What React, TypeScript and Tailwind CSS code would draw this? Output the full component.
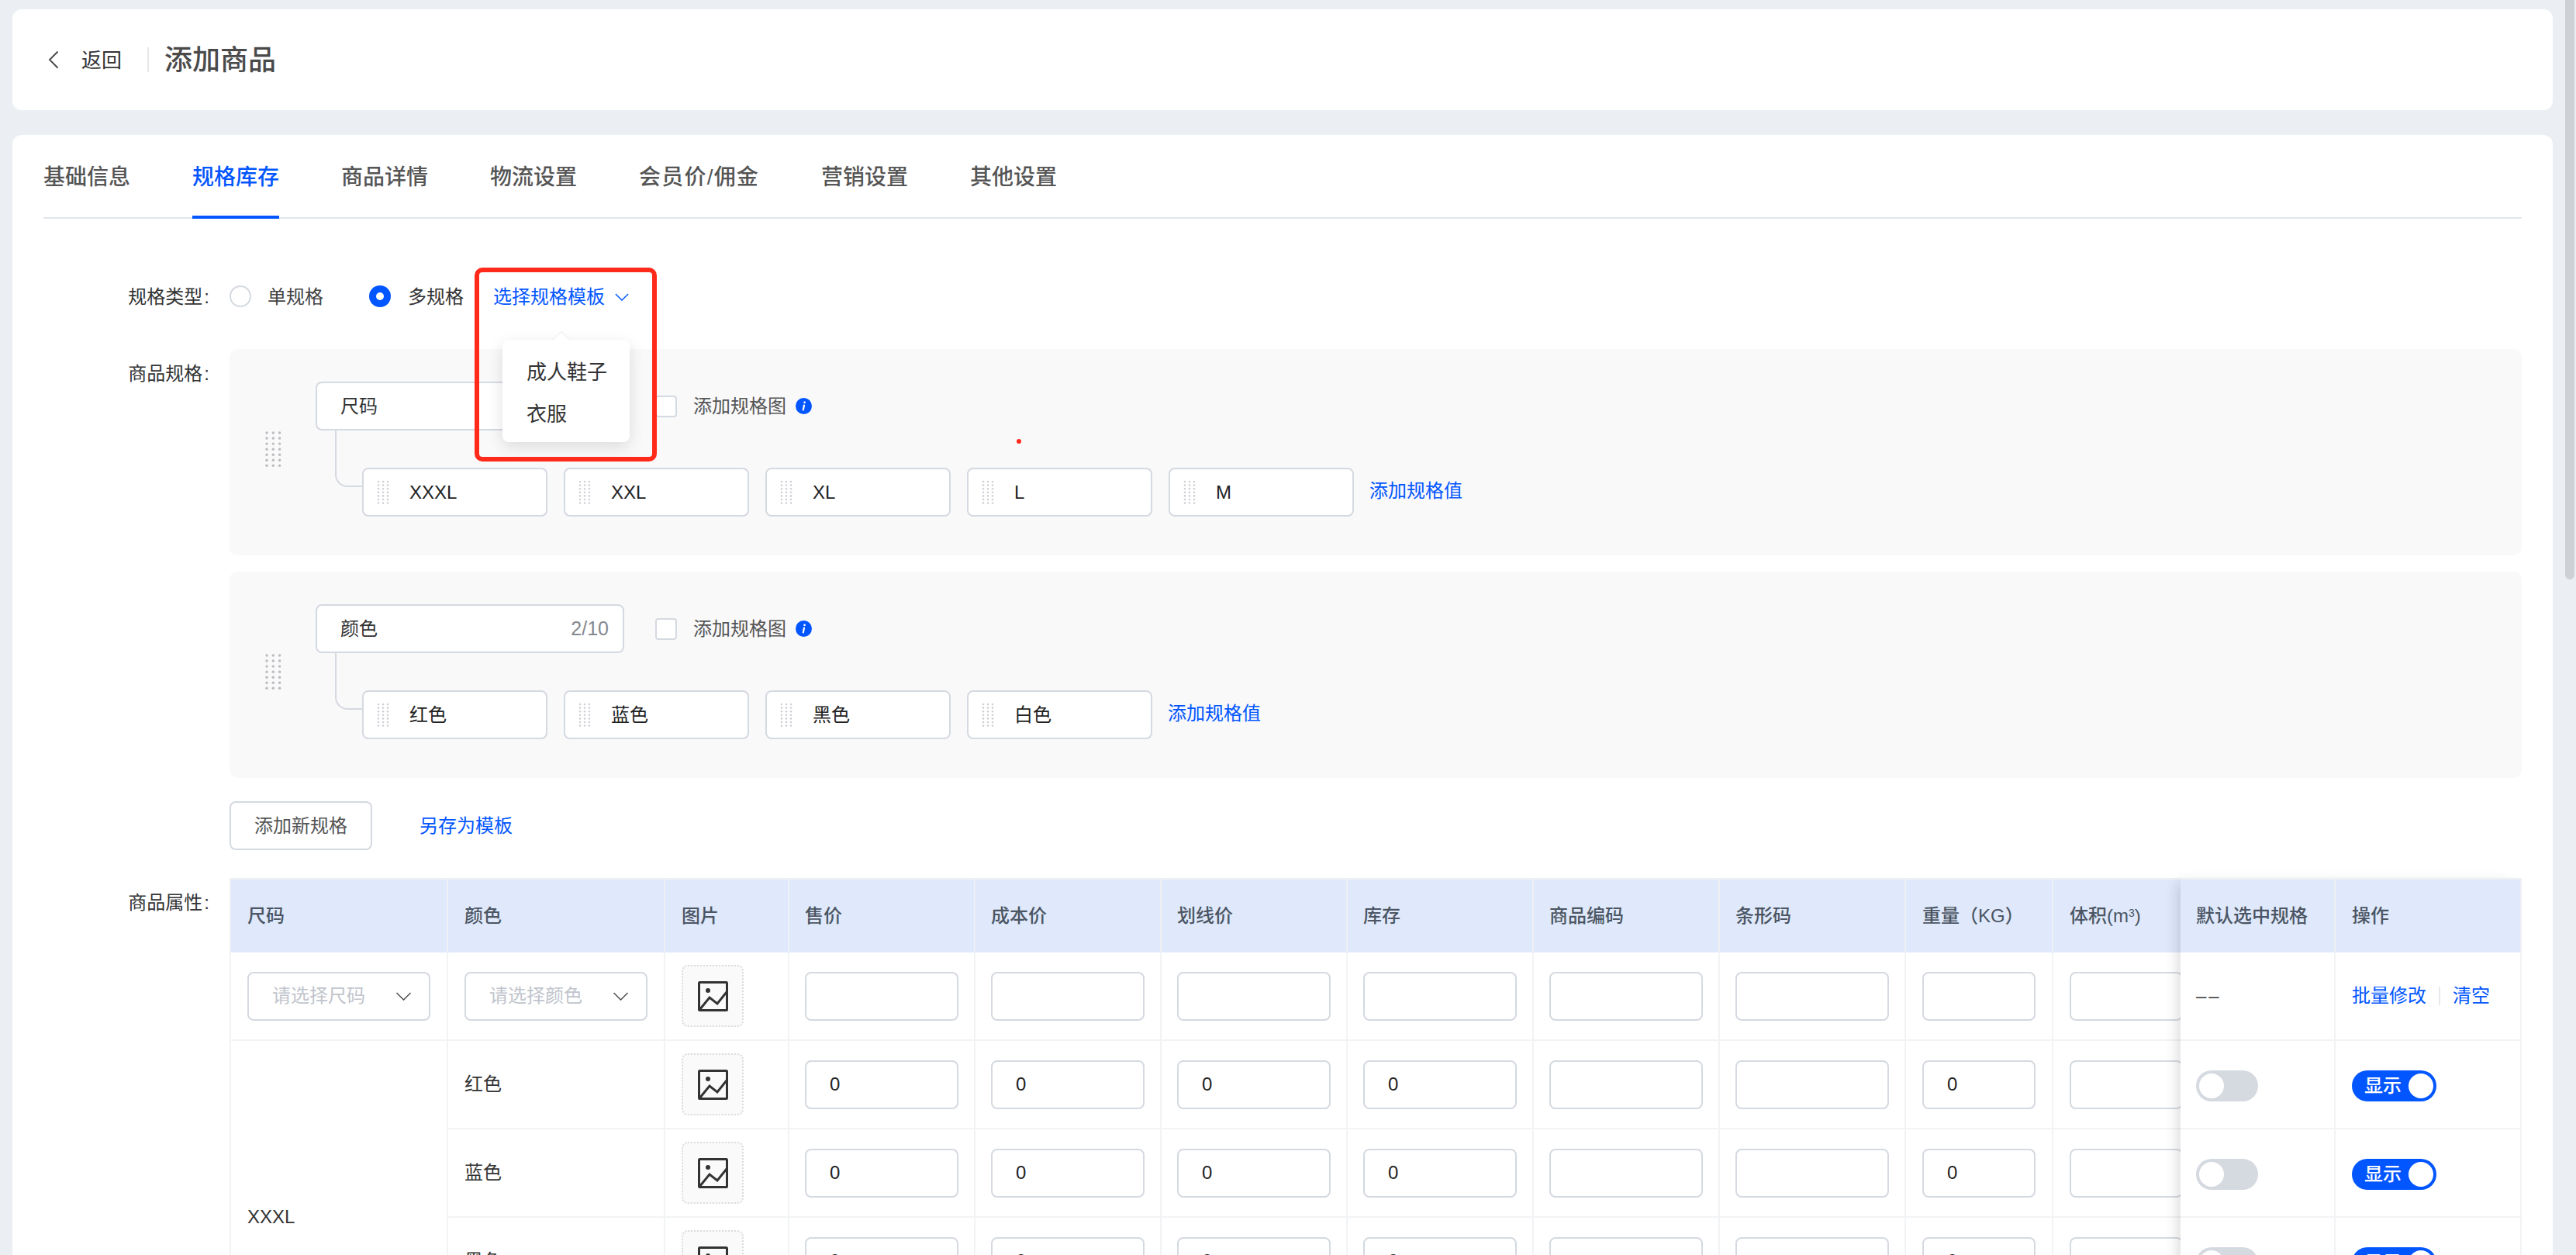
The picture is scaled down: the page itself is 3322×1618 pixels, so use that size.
import React from "react";

const blue = "text-[#0256ff]";
const tabs = ["基础信息", "规格库存", "商品详情", "物流设置", "会员价/佣金", "营销设置", "其他设置"];
const specs = [
  { name: "尺码", count: "5/10", values: ["XXXL", "XXL", "XL", "L", "M"] },
  { name: "颜色", count: "2/10", values: ["红色", "蓝色", "黑色", "白色"] },
];
const priceCols = ["售价", "成本价", "划线价", "库存", "商品编码", "条形码"];
const colors = ["红色", "蓝色", "黑色"];

function Chevron({ className, stroke = "#555" }: { className: string; stroke?: string }) {
  return (
    <svg className={className} viewBox="0 0 20 11" fill="none">
      <path d="M1 1l9 9 9-9" stroke={stroke} strokeWidth="1.6" />
    </svg>
  );
}

function Dots({ big }: { big?: boolean }) {
  const dots = [];
  const dx = big ? 8.3 : 6;
  const dy = big ? 7.05 : 4.6;
  for (let c = 0; c < 3; c++) {
    for (let r = 0; r < 7; r++) {
      dots.push(
        <circle key={`${c}-${r}`} cx={2 + c * dx} cy={2 + r * dy} r={big ? 1.7 : 1.3} fill={big ? "#b9bbbf" : "#cfd1d6"} />
      );
    }
  }
  return (
    <svg className={big ? "w-[21px] h-[46px] shrink-0" : "w-[16px] h-[32px] shrink-0"} viewBox={big ? "0 0 21 46" : "0 0 16 32"}>
      {dots}
    </svg>
  );
}

function InfoIcon() {
  return (
    <svg className="w-[21px] h-[21px]" viewBox="0 0 21 21">
      <circle cx="10.5" cy="10.5" r="10.5" fill="#0256ff" />
      <path d="M11 9.5l-1.2 6" stroke="#fff" strokeWidth="2.2" strokeLinecap="round" />
      <circle cx="11.6" cy="5.8" r="1.4" fill="#fff" />
    </svg>
  );
}

function ImageIcon() {
  return (
    <div className="w-[80px] h-[80px] rounded-lg border-2 border-dotted border-[#dcdcdc] bg-[#fafafa] flex items-center justify-center">
      <svg className="w-[39px] h-[39px]" viewBox="0 0 39 39" fill="none">
        <rect x="1.5" y="1.5" width="36" height="36" rx="1" stroke="#333" strokeWidth="3" />
        <circle cx="13" cy="12" r="3" fill="#333" />
        <path d="M2 37l13-16 10 8 12-15" stroke="#333" strokeWidth="3" />
      </svg>
    </div>
  );
}

function Toggle({ on }: { on?: boolean }) {
  if (on) {
    return (
      <div className="mt-1 w-[109px] h-[40px] rounded-full bg-[#0256ff] flex items-center justify-between pl-4 pr-1 text-white text-[24px] font-medium">
        <span>显示</span>
        <span className="w-[32px] h-[32px] rounded-full bg-white" />
      </div>
    );
  }
  return (
    <div className="mt-1 w-[80px] h-[40px] rounded-full bg-[#d5d9e0] flex items-center pl-1">
      <span className="w-[32px] h-[32px] rounded-full bg-white" />
    </div>
  );
}

function Field({ value }: { value?: string }) {
  return (
    <div className="w-full h-[63px] rounded-lg border-2 border-[#d5d9e0] bg-white pl-[30px] flex items-center text-[24px] text-[#222]">
      {value}
    </div>
  );
}

function Select({ placeholder }: { placeholder: string }) {
  return (
    <div className="w-[236px] h-[63px] rounded-lg border-2 border-[#d5d9e0] bg-white pl-[30px] pr-[22px] flex items-center justify-between text-[24px] text-[#c0c4cc]">
      <span>{placeholder}</span>
      <Chevron className="w-[21px] h-[11px]" />
    </div>
  );
}

const headCell = "h-[96px] border-t-2 border-r-2 border-[#eef0f3] bg-[#dfe9fb] text-left align-middle text-[24px] font-medium text-[#4b5563] whitespace-nowrap";
const bodyCell = "h-[114px] border-r-2 border-b-2 border-[#f2f3f5] align-middle text-[24px] text-[#333]";

function SpecPanel({ spec }: { spec: (typeof specs)[number] }) {
  return (
    <div className="h-[266px] rounded-[10px] bg-[#f9f9fa] pl-[46px] flex items-center">
      <div className="-mt-2">
        <Dots big />
      </div>
      <div className="ml-[44px] self-start pt-[42px]">
        <div className="flex items-center">
          <div className="w-[398px] h-[63px] rounded-lg border-2 border-[#d5d9e0] bg-white pl-[30px] pr-[18px] flex items-center justify-between text-[24px] text-[#333]">
            <span>{spec.name}</span>
            <span className="text-[25px] text-[#86888e]">{spec.count}</span>
          </div>
          <div className="ml-[40px] w-[28px] h-[28px] rounded border-2 border-[#d5d9e0] bg-white" />
          <span className="ml-[21px] text-[24px] text-[#555]">添加规格图</span>
          <span className="ml-3 flex">
            <InfoIcon />
          </span>
        </div>
        <div className="mt-[48px] flex items-center">
          <div className="ml-[25px] w-[35px] h-[74px] -mt-[49px] self-start border-l-2 border-b-2 border-[#d5d9e0] rounded-bl-[16px]" />
          <div className="flex gap-[21px]">
            {spec.values.map((v) => (
              <div key={v} className="w-[239px] h-[63px] rounded-lg border-2 border-[#d5d9e0] bg-white pl-[17px] flex items-center text-[24px] text-[#222]">
                <Dots />
                <span className="ml-[26px]">{v}</span>
              </div>
            ))}
          </div>
          <span className={`ml-5 mb-1 text-[24px] ${blue}`}>添加规格值</span>
        </div>
      </div>
    </div>
  );
}

export default function App() {
  return (
    <div className="relative h-[1618px] w-[3322px] overflow-hidden bg-[#ebeff3] flex [font-family:'Liberation_Sans','Noto_Sans_CJK_SC',sans-serif]">
      <main className="w-[3308px] shrink-0 px-4 pt-3">
        <div className="h-[130px] rounded-xl bg-white pl-[46px] flex items-center">
          <svg className="w-[14px] h-[24px]" viewBox="0 0 14 24" fill="none">
            <path d="M12.5 1.5L2 12l10.5 10.5" stroke="#444" strokeWidth="1.8" />
          </svg>
          <span className="ml-[29px] pt-[2px] text-[26px] text-[#333]">返回</span>
          <span className="ml-[33px] w-[2px] h-[32px] bg-[#e6e8ec]" />
          <h1 className="ml-5 pt-[2px] text-[36px] font-medium text-[#4a4a4a]">添加商品</h1>
        </div>

        <div className="mt-8 h-[1500px] rounded-xl bg-white px-10">
          <div className="h-[108px] flex items-start gap-[80px] border-b-2 border-[#e1e5ea]">
            {tabs.map((t, i) => (
              <div
                key={t}
                className={`h-[108px] flex items-center border-b-4 pt-[6px] text-[28px] font-medium ${
                  i === 1 ? "border-[#0256ff] text-[#0256ff]" : "border-transparent text-[#555]"
                } ${i === 4 ? "tracking-[1.2px]" : ""}`}
              >
                {t}
              </div>
            ))}
          </div>

          <div className="mt-[72px] flex h-[56px] items-center text-[24px]">
            <div className="w-[214px] pt-[2px] text-right text-[#333]">
              规格类型<span className="ml-[2px]">:</span>
            </div>
            <div className="ml-[26px] w-[28px] h-[28px] rounded-full border-2 border-[#d5d9e0] bg-white" />
            <span className="ml-[21px] pt-[2px] text-[#444]">单规格</span>
            <div className="ml-[59px] w-[28px] h-[28px] rounded-full bg-[#0256ff] flex items-center justify-center">
              <span className="w-[10px] h-[10px] rounded-full bg-white" />
            </div>
            <span className="ml-[22px] pt-[2px] text-[#333]">多规格</span>
            <div className={`relative ml-[38px] flex items-center pt-[2px] ${blue}`}>
              <span>选择规格模板</span>
              <Chevron className="ml-[13px] w-[18px] h-[10px]" stroke="#0256ff" />
              <div className="absolute left-[12px] top-[75px] z-20 w-[164px] rounded-lg bg-white pt-[15px] pb-[9px] pl-[31px] text-[26px] leading-[54px] text-[#333] shadow-[0_6px_20px_rgba(0,0,0,0.12)]">
                <span className="absolute -top-[8px] left-[68px] w-[16px] h-[16px] rotate-45 bg-white border-l border-t border-[#eceef1]" />
                <div>成人鞋子</div>
                <div>衣服</div>
              </div>
            </div>
          </div>

          <div className="mt-10 flex">
            <div className="w-[214px] pt-[14px] text-right text-[24px] leading-[36px] text-[#333]">
              商品规格<span className="ml-[2px]">:</span>
            </div>
            <div className="ml-[26px] flex-1">
              <div className="flex flex-col gap-[21px]">
                {specs.map((s) => (
                  <SpecPanel key={s.name} spec={s} />
                ))}
              </div>
              <div className="mt-[30px] flex items-center text-[24px]">
                <div className="w-[184px] h-[63px] rounded-lg border-2 border-[#d5d9e0] flex items-center justify-center text-[#555]">添加新规格</div>
                <span className={`ml-[61px] ${blue}`}>另存为模板</span>
              </div>
            </div>
          </div>

          <div className="mt-[36px] flex">
            <div className="w-[214px] pt-[14px] text-right text-[24px] leading-[36px] text-[#333]">
              商品属性<span className="ml-[2px]">:</span>
            </div>
            <div className="ml-[26px] flex flex-1">
              <div className="w-[2516px] shrink-0 overflow-hidden">
                <table className="w-[2542px] table-fixed border-separate border-spacing-0">
                  <colgroup>
                    <col className="w-[282px]" />
                    <col className="w-[280px]" />
                    <col className="w-[160px]" />
                    {priceCols.map((c) => (
                      <col key={c} className="w-[240px]" />
                    ))}
                    <col className="w-[190px]" />
                    <col className="w-[190px]" />
                  </colgroup>
                  <thead>
                    <tr>
                      <th className={`${headCell} border-l-2 px-[21px]`}>尺码</th>
                      <th className={`${headCell} px-[21px]`}>颜色</th>
                      <th className={`${headCell} px-[21px]`}>图片</th>
                      {priceCols.map((c) => (
                        <th key={c} className={`${headCell} px-5`}>{c}</th>
                      ))}
                      <th className={`${headCell} px-[21px]`}>重量（KG）</th>
                      <th className={`${headCell} px-[21px]`}>
                        体积(m<sup className="text-[14px]">3</sup>)
                      </th>
                    </tr>
                  </thead>
                  <tbody>
                    <tr>
                      <td className={`${bodyCell} border-l-2 px-[21px]`}>
                        <Select placeholder="请选择尺码" />
                      </td>
                      <td className={`${bodyCell} px-[21px]`}>
                        <Select placeholder="请选择颜色" />
                      </td>
                      <td className={`${bodyCell} px-[21px]`}>
                        <ImageIcon />
                      </td>
                      {priceCols.map((c) => (
                        <td key={c} className={`${bodyCell} px-5`}>
                          <Field />
                        </td>
                      ))}
                      <td className={`${bodyCell} px-[21px]`}>
                        <Field />
                      </td>
                      <td className={`${bodyCell} px-[21px]`}>
                        <Field />
                      </td>
                    </tr>
                    {colors.map((color, i) => (
                      <tr key={color}>
                        {i === 0 && (
                          <td rowSpan={4} className={`${bodyCell} border-l-2 px-[21px]`}>XXXL</td>
                        )}
                        <td className={`${bodyCell} px-[21px]`}>{color}</td>
                        <td className={`${bodyCell} px-[21px]`}>
                          <ImageIcon />
                        </td>
                        {priceCols.map((c, j) => (
                          <td key={c} className={`${bodyCell} px-5`}>
                            <Field value={j < 4 ? "0" : undefined} />
                          </td>
                        ))}
                        <td className={`${bodyCell} px-[21px]`}>
                          <Field value="0" />
                        </td>
                        <td className={`${bodyCell} px-[21px]`}>
                          <Field />
                        </td>
                      </tr>
                    ))}
                    <tr className="h-[114px]" />
                  </tbody>
                </table>
              </div>

              <div className="relative z-10 w-[440px] shrink-0 bg-white shadow-[-10px_0_16px_-6px_rgba(0,0,0,0.14)]">
                <table className="w-[440px] table-fixed border-separate border-spacing-0">
                  <colgroup>
                    <col className="w-[200px]" />
                    <col className="w-[240px]" />
                  </colgroup>
                  <thead>
                    <tr>
                      <th className={`${headCell} px-5`}>默认选中规格</th>
                      <th className={`${headCell} px-[21px]`}>操作</th>
                    </tr>
                  </thead>
                  <tbody>
                    <tr>
                      <td className={`${bodyCell} px-5 tracking-[3px]`}>––</td>
                      <td className={`${bodyCell} px-[21px]`}>
                        <div className={`flex items-center whitespace-nowrap ${blue}`}>
                          <span>批量修改</span>
                          <span className="mx-4 w-[2px] h-[24px] bg-[#e6e8ec]" />
                          <span>清空</span>
                        </div>
                      </td>
                    </tr>
                    {colors.map((color) => (
                      <tr key={color}>
                        <td className={`${bodyCell} px-5`}>
                          <Toggle />
                        </td>
                        <td className={`${bodyCell} px-[21px]`}>
                          <Toggle on />
                        </td>
                      </tr>
                    ))}
                  </tbody>
                </table>
              </div>
            </div>
          </div>
        </div>
      </main>

      <aside className="w-[12px] shrink-0">
        <div className="h-[747px] rounded-b-lg bg-[#cdd1d6]" />
      </aside>

      {/* annotation marks drawn on top of the screenshot */}
      <div className="pointer-events-none absolute left-[612px] top-[345px] z-30 w-[235px] h-[250px] rounded-[10px] border-[6px] border-[#ff2a1a]" />
      <div className="absolute left-[1311px] top-[566px] w-[6px] h-[6px] rounded-full bg-[#ff2a1a]" />
    </div>
  );
}
